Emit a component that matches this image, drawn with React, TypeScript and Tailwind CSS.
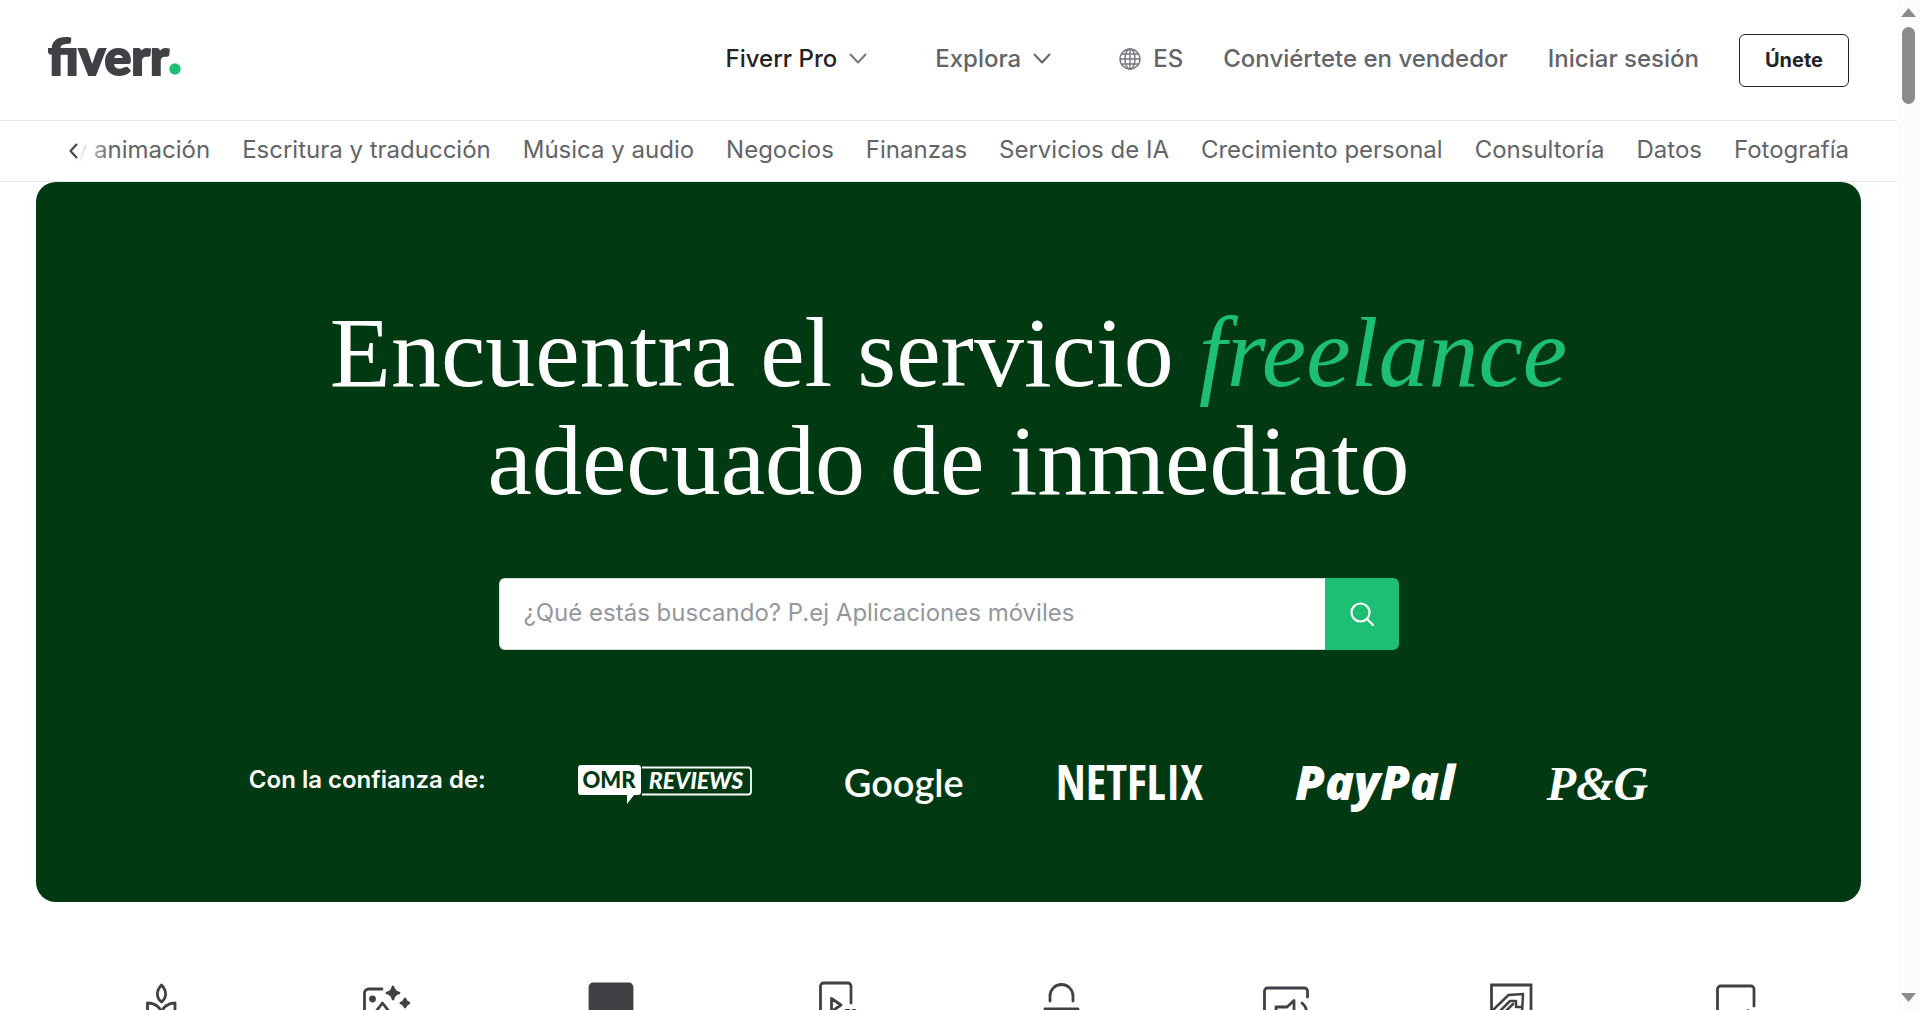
import type { ReactNode } from "react";

const categories = [
  "Escritura y traducción",
  "Música y audio",
  "Negocios",
  "Finanzas",
  "Servicios de IA",
  "Crecimiento personal",
  "Consultoría",
  "Datos",
  "Fotografía",
];

function ChevronDown({ className }: { className?: string }) {
  return (
    <svg className={className} width="18" height="12" viewBox="0 0 18 12" fill="none" stroke="currentColor" strokeWidth="2" strokeLinecap="round" strokeLinejoin="round">
      <path d="M1.5 1.5 9 9.5l7.5-8" />
    </svg>
  );
}

function Globe() {
  return (
    <svg width="22" height="22" viewBox="0 0 22 22" fill="none" stroke="#74767e" strokeWidth="1.4">
      <circle cx="11" cy="11" r="10" />
      <ellipse cx="11" cy="11" rx="5" ry="10" />
      <path d="M11 1v20M1 11h20M2.5 6h17M2.5 16h17" />
    </svg>
  );
}

function Logo() {
  return (
    <a href="#" className="flex items-baseline pb-2 text-[#404145]">
      <span className="font-['Lato',sans-serif] text-[50px] leading-[60px] font-black [-webkit-text-stroke:2px_#404145]">fiverr</span>
      <svg width="12" height="12" viewBox="0 0 12 12" fill="#1dbf73">
        <circle cx="6" cy="6" r="5.7" />
      </svg>
    </a>
  );
}

function Header() {
  return (
    <header className="flex h-[121px] items-center justify-between border-b border-[#e4e5e7] px-12">
      <Logo />
      <div className="flex items-center gap-10 text-2xl font-medium text-[#62646a]">
        <nav className="flex items-center gap-10 pb-0.5">
          <button className="mr-7 flex items-center gap-3 text-[#222325]">
            Fiverr Pro
            <ChevronDown className="text-[#74767e]" />
          </button>
          <button className="mr-7 flex items-center gap-3">
            Explora
            <ChevronDown />
          </button>
          <button className="flex items-center gap-3">
            <Globe />
            ES
          </button>
          <a href="#">Conviértete en vendedor</a>
          <a href="#">Iniciar sesión</a>
        </nav>
        <button className="h-[53px] min-w-[110px] rounded-md border border-[#222325] px-6 text-xl font-bold text-[#222325]">Únete</button>
      </div>
    </header>
  );
}

function CategoryBar() {
  return (
    <nav className="relative h-[61px] border-b border-[#e4e5e7] px-12">
      <ul className="flex h-full items-center justify-end gap-8 overflow-hidden pb-0.5 text-2xl whitespace-nowrap text-[#62646a]">
        <li>
          <a href="#">y animación</a>
        </li>
        {categories.map((name) => (
          <li key={name}>
            <a href="#">{name}</a>
          </li>
        ))}
      </ul>
      {/* fade on the scrolled side */}
      <div className="absolute inset-y-0 left-12 flex items-center">
        <button aria-label="Anterior" className="flex h-full w-[30px] items-center justify-end bg-white">
          <svg width="9" height="16" viewBox="0 0 9 16" fill="none" stroke="#404145" strokeWidth="2" strokeLinecap="round" strokeLinejoin="round">
            <path d="M7.5 1.5 1.5 8l6 6.5" />
          </svg>
        </button>
        <div className="h-full w-8 bg-gradient-to-r from-white to-white/0" />
      </div>
    </nav>
  );
}

function OmrLogo() {
  return (
    <svg width="174" height="40" viewBox="0 0 174 40">
      <path d="M3 1h57a3 3 0 0 1 3 3v24a3 3 0 0 1-3 3h-4l-7 9v-9H3a3 3 0 0 1-3-3V4a3 3 0 0 1 3-3Z" fill="#fff" />
      <path d="M64 3.5h106a3 3 0 0 1 3 3v21a3 3 0 0 1-3 3H64" fill="none" stroke="#fff" strokeWidth="1.8" />
      <text x="31" y="24" textAnchor="middle" fill="#003912" className="font-['Lato',sans-serif] text-[22px] font-black">OMR</text>
      <text x="118" y="25" textAnchor="middle" fill="#fff" className="font-['Lato',sans-serif] text-[23px] font-black italic">REVIEWS</text>
    </svg>
  );
}

function TrustedBy() {
  return (
    <div className="flex justify-center gap-[92px] text-white">
      <p className="text-2xl font-semibold">Con la confianza de:</p>
      <OmrLogo />
      <span className="font-['Lato',sans-serif] text-[38px] leading-9 font-semibold">Google</span>
      <span className="font-['Open_Sans_Condensed','Roboto_Condensed',sans-serif] text-5xl leading-9 font-bold">NETFLIX</span>
      <span className="font-['Open_Sans',sans-serif] text-5xl leading-9 font-extrabold italic">PayPal</span>
      <span className="font-['Liberation_Serif',serif] text-5xl leading-10 font-bold italic">P&amp;G</span>
    </div>
  );
}

function Hero() {
  return (
    <section className="mx-9 rounded-[20px] bg-[#003912] pt-[117px] pb-[98px]">
      <h1 className="text-center font-['Liberation_Serif',serif] text-[100px] leading-[108px] text-white">
        Encuentra el servicio <em className="text-[#1dbf73]">freelance</em>
        <br />
        adecuado de inmediato
      </h1>
      <form className="mx-auto mt-[63px] mb-[114px] flex h-[72px] max-w-[900px]">
        <input
          type="search"
          aria-label="Buscar servicios"
          placeholder="¿Qué estás buscando? P.ej Aplicaciones móviles"
          className="min-w-0 flex-1 rounded-l-md border border-r-0 border-[#dadbdd] bg-white px-6 pb-0.5 text-2xl text-[#404145] placeholder:text-[#95979d]"
        />
        <button type="button" aria-label="Buscar" className="flex w-[74px] items-center justify-center rounded-r-md bg-[#1dbf73]">
          <svg width="24" height="24" viewBox="0 0 24 24" fill="none" stroke="#fff" strokeWidth="2.2" strokeLinecap="round">
            <circle cx="10.5" cy="10.5" r="9" />
            <path d="m17 17 6 6" />
          </svg>
        </button>
      </form>
      <TrustedBy />
    </section>
  );
}

const services: { name: string; icon: ReactNode }[] = [
  {
    name: "Estilo de vida",
    icon: (
      <>
        <path d="M24.5 7c-5.5 6-5.5 12 0 17 5.5-5 5.5-11 0-17Z" />
        <path d="M10.5 38V25c7 0 13 4 14 10 1-6 7-10 13.5-10v13" />
      </>
    ),
  },
  {
    name: "Imágenes con IA",
    icon: (
      <>
        <path d="M2.5 44V15a4 4 0 0 1 4-4H20M12 36l8.5-11L29 36" />
        <circle cx="10.5" cy="21" r="2" fill="currentColor" />
        <path d="M31 9q1 5 6 6-5 1-6 6-1-5-6-6 5-1 6-6ZM43 21q.8 3 4 4-3.200 1-4 4-.8-3-4-4 3.200-1 4-4Z" fill="currentColor" />
      </>
    ),
  },
  { name: "Pantallas", icon: <rect x="3" y="6" width="42" height="40" rx="3" fill="currentColor" /> },
  {
    name: "Vídeo",
    icon: (
      <>
        <path d="M8.5 44V8a3 3 0 0 1 3-3H36a3 3 0 0 1 3 3v17" />
        <path d="m19.5 20.5 9.5 6.5-9.5 6.5ZM34 32.5h3M41 32.5h2" />
      </>
    ),
  },
  { name: "Soporte", icon: <path d="M13 23v-5a11.5 11.5 0 0 1 23 0v5M8 31h33" /> },
  {
    name: "Audio",
    icon: (
      <>
        <path d="M2.500 44V13a3 3 0 0 1 3-3h37a3 3 0 0 1 3 3v6" />
        <path d="M14 38v-9h11l7-6.500V38M40 25q5 4 5 12" />
      </>
    ),
  },
  {
    name: "Diseño",
    icon: (
      <>
        <path d="M4.5 44V7H44v37" strokeLinejoin="miter" />
        <path d="m5 33 16.5-16L36 16l-1 20M12 34l11-11h6v6h5M18 34l8-8" strokeWidth="2.5" />
      </>
    ),
  },
  { name: "Mensajes", icon: <path d="M5.5 44V11a3 3 0 0 1 3-3H39a3 3 0 0 1 3 3v17M34 34l2-1.500" /> },
];

function Services() {
  return (
    <ul className="mt-[76px] grid grid-cols-8 px-12 text-[#404145]">
      {services.map(({ name, icon }) => (
        <li key={name} className="flex justify-center">
          <a href="#" aria-label={name}>
            <svg width="48" height="48" viewBox="0 0 48 48" fill="none" stroke="currentColor" strokeWidth="2.8" strokeLinecap="round" strokeLinejoin="round">
              {icon}
            </svg>
          </a>
        </li>
      ))}
    </ul>
  );
}

function ScrollRail() {
  return (
    <div aria-hidden="true" className="flex w-[23px] shrink-0 flex-col items-center bg-[#fcfcfc] py-2 text-[#8b8b8b]">
      <svg width="15" height="9" viewBox="0 0 15 9" fill="currentColor">
        <path d="M7.5 0 15 9H0Z" />
      </svg>
      <div className="mt-[10px] h-[77px] w-[13px] rounded-full bg-current" />
      <svg className="mt-auto" width="15" height="9" viewBox="0 0 15 9" fill="currentColor">
        <path d="M0 0h15L7.5 9Z" />
      </svg>
    </div>
  );
}

export default function App() {
  return (
    <div className="flex h-screen overflow-hidden bg-white font-['Inter',sans-serif]">
      <main className="min-w-0 flex-1 overflow-hidden">
        <Header />
        <CategoryBar />
        <Hero />
        <Services />
      </main>
      <ScrollRail />
    </div>
  );
}
